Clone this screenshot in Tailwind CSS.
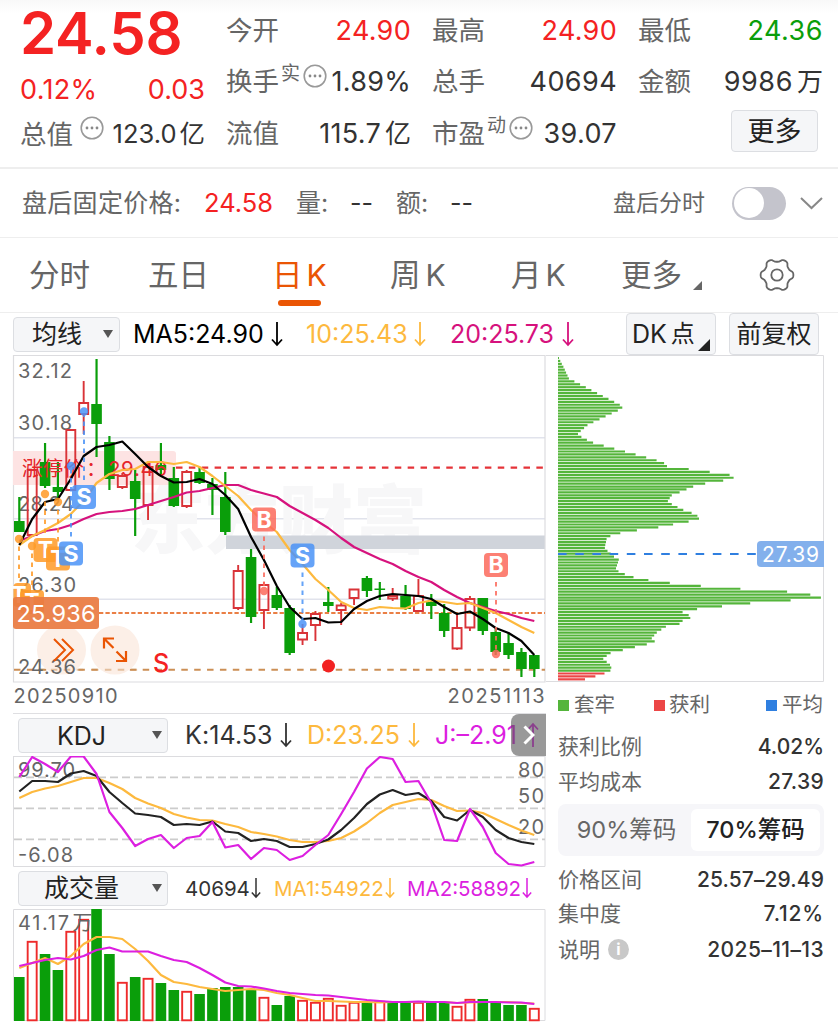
<!DOCTYPE html>
<html lang="zh-CN">
<head>
  <meta charset="UTF-8">
  <meta name="viewport" content="width=device-width, initial-scale=1.0">
  <title>日K 行情</title>
  <script src="https://cdn.jsdelivr.net/npm/@tailwindcss/browser@4"></script>
</head>
<body class="bg-white w-[838px] h-[1024px] overflow-hidden font-['Inter','Noto_Sans_CJK_SC',sans-serif] text-[#666] leading-none whitespace-nowrap">
  <!-- Shared icons -->
  <svg class="hidden">
    <symbol id="down" viewBox="0 0 12 26"><path d="M6 1V24M1 18.5L6 24L11 18.5" fill="none" stroke="currentColor" stroke-width="1.8"/></symbol>
    <symbol id="more" viewBox="0 0 24 24"><circle cx="12" cy="12" r="10.8" fill="none" stroke="#999" stroke-width="1.6"/><g fill="#888"><circle cx="7" cy="12" r="1.4"/><circle cx="12" cy="12" r="1.4"/><circle cx="17" cy="12" r="1.4"/></g></symbol>
    <symbol id="caret" viewBox="0 0 10 8"><path d="M0 0H10L5 8Z" fill="#555"/></symbol>
  </svg>

  <!-- Quote -->
  <header class="h-[169px] border-b-2 border-[#eee] pl-[20px] pt-1 flex gap-[21px] text-[26.5px] bg-linear-to-b from-[#f8f8f8] from-0% to-white to-8%">
    <div class="w-[185px]">
      <div class="h-[58px] flex items-center text-[58px] font-semibold text-[#f42222] tracking-[-0.2px]">24.58</div>
      <div class="h-[54px] flex items-center justify-between text-[#f42222]"><span class="text-[27px] tracking-[0.3px]">0.12%</span><span class="text-[27px]">0.03</span></div>
      <div class="h-[36px] flex items-center"><span class="w-[60px]">总值</span><svg class="w-6 h-6 mb-3"><use href="#more"/></svg><span class="ml-auto text-[#333] text-[25.5px]">123.0<span class="ml-[3px]">亿</span></span></div>
    </div>
    <div class="w-[185px]">
      <div class="h-[52px] flex items-center justify-between"><span>今开</span><span class="text-[#f42222] text-[27px] tracking-[0.3px]">24.90</span></div>
      <div class="h-[51px] flex items-center"><span>换手</span><span class="text-[19px] mb-4 ml-[2px]">实</span><svg class="w-6 h-6 mb-3 ml-[3px]"><use href="#more"/></svg><span class="ml-auto text-[#333] text-[27px] tracking-[0.3px]">1.89%</span></div>
      <div class="h-[53px] flex items-center justify-between"><span>流值</span><span class="text-[#333] text-[27px] tracking-[0.3px]">115.7<span class="ml-1 text-[26px] tracking-normal">亿</span></span></div>
    </div>
    <div class="w-[185px]">
      <div class="h-[52px] flex items-center justify-between"><span>最高</span><span class="text-[#f42222] text-[27px] tracking-[0.3px]">24.90</span></div>
      <div class="h-[51px] flex items-center justify-between"><span>总手</span><span class="text-[#333] text-[27px] tracking-[0.4px]">40694</span></div>
      <div class="h-[53px] flex items-center"><span>市盈</span><span class="text-[19px] mb-4 ml-[2px]">动</span><svg class="w-6 h-6 mb-3 ml-[3px]"><use href="#more"/></svg><span class="ml-auto text-[#333] text-[27px] tracking-[0.4px]">39.07</span></div>
    </div>
    <div class="w-[185px]">
      <div class="h-[52px] flex items-center justify-between"><span>最低</span><span class="text-[#0a9e0a] text-[27px] tracking-[0.5px]">24.36</span></div>
      <div class="h-[51px] flex items-center justify-between"><span>金额</span><span class="text-[#333] text-[27px] tracking-[0.6px]">9986<span class="ml-1 text-[26px] tracking-normal">万</span></span></div>
      <div class="h-[52px] flex items-start justify-end"><button class="w-[87px] h-[42px] mr-[5px] mt-[3px] border border-[#dcdee2] rounded bg-[#f5f6f8] text-[#222] text-[27px]">更多</button></div>
    </div>
  </header>

  <!-- After-hours price -->
  <div class="h-[69px] border-b border-[#eee] pl-[22px] flex items-center text-[25px]">
    <span class="w-[182px] tracking-[0.3px]">盘后固定价格:</span>
    <span class="w-[92px] text-[#f42222] text-[25.5px]">24.58</span>
    <span class="w-[54px]">量:</span>
    <span class="w-[46px] text-[#333]">--</span>
    <span class="w-[54px]">额:</span>
    <span class="w-[163px] text-[#333]">--</span>
    <span class="w-[119px] text-[23px]">盘后分时</span>
    <span class="w-[54px] h-[33px] rounded-full bg-[#c4c4cc] p-[1.5px]"><span class="block w-[30px] h-[30px] rounded-full bg-white"></span></span>
    <svg class="ml-[14px] w-[23px] h-[13px]" viewBox="0 0 23 13"><path d="M1 1L11.500 11L22 1" fill="none" stroke="#888" stroke-width="2"/></svg>
  </div>

  <!-- Period tabs -->
  <nav class="h-[75px] border-b border-[#eee] pl-[29px] flex items-center text-[30.5px]">
    <span class="w-[119px]">分时</span>
    <span class="w-[124px]">五日</span>
    <span class="relative w-[118px] text-[#ea5504]">日<span class="ml-[4px] text-[30px]">K</span><span class="absolute left-[6px] top-[40px] w-[43px] h-[6px] rounded-full bg-[#ea5504]"></span></span>
    <span class="w-[121px]">周<span class="ml-[5px] text-[30px]">K</span></span>
    <span class="w-[110px]">月<span class="ml-[4px] text-[30px]">K</span></span>
    <span>更多</span>
    <svg class="w-[9px] h-[9px] ml-[11px] mt-5" viewBox="0 0 9 9"><path d="M9 0V9H0Z" fill="#666"/></svg>
    <svg class="w-9 h-9 ml-[57px]" viewBox="-18 -18 36 36" fill="none" stroke="#666" stroke-width="1.800"><path id="gear" stroke-linejoin="round"/><circle r="5.700"/></svg>
  </nav>

  <!-- MA toolbar -->
  <div class="h-[42px] pl-[13px] flex items-center text-[25px]">
    <div class="w-[107px] h-[35px] mr-[13px] border border-[#dcdee2] rounded bg-[#f5f6f8] text-[#222] flex items-center pl-[18px]"><span class="w-[71px]">均线</span><svg class="w-[10px] h-2"><use href="#caret"/></svg></div>
    <span class="w-[138px] text-black">MA5:24.90</span><svg class="w-3 h-[26px] mr-[23px] text-black"><use href="#down"/></svg>
    <span class="w-[108px] text-[#fdb93e]">10:25.43</span><svg class="w-3 h-[26px] mr-6 text-[#fdb93e]"><use href="#down"/></svg>
    <span class="w-[112px] text-[#d6127d]">20:25.73</span><svg class="w-3 h-[26px] text-[#d6127d]"><use href="#down"/></svg>
    <div class="w-[90px] h-[42px] ml-[52px] border border-[#dcdee2] rounded bg-[#f5f6f8] text-[#222] flex items-center pl-[5px] relative">DK<span class="ml-1 text-[24px]">点</span><svg class="absolute right-[5px] bottom-[3px] w-3 h-3" viewBox="0 0 12 12"><path d="M12 0V12H0Z" fill="#222"/></svg></div>
    <div class="w-[90px] h-[42px] ml-[13px] border border-[#dcdee2] rounded bg-[#f5f6f8] text-[#222] flex items-center justify-center">前复权</div>
  </div>

  <main class="flex">
    <section class="w-[546px]">
      <!-- Candles; user units are page pixels -->
      <svg class="block w-[546px] h-[358px]" viewBox="0 355 546 358" font-family="Inter, 'Noto Sans CJK SC', sans-serif" fill="none">
        <g stroke="#e1e3ec" stroke-width="1.500">
          <path d="M14 437.700H545M14 518.700H545M14 599.300H545"/>
        </g>
        <text x="131" y="547" font-size="74" font-weight="900" fill="#f7f7f8" textLength="296">东方财富</text>
        <path d="M226 542.300H545" stroke="#d0d4db" stroke-width="13.500"/>
        <path d="M13.500 682V355.500H545V682Z" stroke="#dcdcdf" stroke-width="1.200"/>
        <path d="M176 467.700H545" stroke="#e53338" stroke-width="2.200" stroke-dasharray="6.500 6.370"/>
        <path d="M99 613H545" stroke="#ea7f45" stroke-width="2" stroke-dasharray="4.300 2.150"/>
        <path d="M14 669.800H545" stroke="#cc8f55" stroke-width="2" stroke-dasharray="6.500 6.370"/>
        <path d="M13 451H173Q176 451 176 454V482Q176 485 173 485H13Z" fill="#fde3e3"/>
        <g fill="#fcefe7"><circle cx="61.500" cy="650" r="24.500"/><circle cx="115" cy="650" r="24.500"/></g>
        <path d="M38 669.800H86M92 669.800H139" stroke="#cc8f55" stroke-opacity=".5" stroke-width="2" stroke-dasharray="6.500 6.370"/>
        <g font-size="20" fill="#666">
          <text x="18" y="378" textLength="54">32.12</text>
          <text x="18" y="430" textLength="54">30.18</text>
          <text x="18" y="511" textLength="56">28.24</text>
          <text x="18" y="592" textLength="58">26.30</text>
          <text x="18" y="674" textLength="58">24.36</text>
          <text x="13.500" y="703" textLength="104">20250910</text>
          <text x="447.500" y="703" textLength="97">20251113</text>
        </g>
        <g id="candles"></g>
        <g font-size="20.500" fill="#e5262b">
          <text x="22" y="476" textLength="62">涨停价</text><text x="86" y="476">：</text><text x="108" y="475.500" textLength="59">29.46</text>
        </g>
        <g id="averages" stroke-width="2.200" stroke-linejoin="round"></g>
        <g id="markers" font-size="23" font-weight="700" text-anchor="middle"></g>
        <rect x="13" y="597" width="86" height="32" rx="3" fill="#e97b42" fill-opacity=".93"/>
        <text x="16.500" y="621.500" font-size="23.500" fill="#fff" textLength="79">25.936</text>
        <path d="M54 639L65 650L54 661M62 639L73 650L62 661" stroke="#ea5504" stroke-width="2"/>
        <path d="M114 638.500H104V648.500M104 638.500L113.500 648M116 661H126V651M126 661L116.500 651.500" stroke="#ea5504" stroke-width="2.200"/>
        <text x="153" y="671.500" font-size="25" font-weight="500" fill="#f42222">S</text>
        <circle cx="328.500" cy="666" r="6.500" fill="#f22222"/>
      </svg>

      <!-- KDJ -->
      <div class="relative ml-[13px] h-[43px] border-t border-[#dfdfe2] pl-[5px] flex items-center text-[25px]">
        <div class="w-[150px] h-[35px] mr-[17px] border border-[#dcdee2] rounded bg-[#f5f6f8] text-[#222] flex items-center pl-[38px]"><span class="w-[95px] pt-[2px]">KDJ</span><svg class="w-[10px] h-2"><use href="#caret"/></svg></div>
        <span class="w-[95px] pt-px text-[#333] tracking-[0.1px]">K:14.53</span><svg class="w-3 h-[26px] mr-[15px] text-[#333]"><use href="#down"/></svg>
        <span class="w-[101px] pt-px text-[#fdb93e]">D:23.25</span><svg class="w-3 h-[26px] mr-[15px] text-[#fdb93e]"><use href="#down"/></svg>
        <span class="w-[92px] pt-px text-[#dc1fe0]">J:–2.91</span><svg class="w-3 h-[26px] text-[#dc1fe0] rotate-180"><use href="#down"/></svg>
        <div class="absolute right-0 top-0 w-[35px] h-[42px] rounded-l-lg bg-[#555]/60 flex items-center justify-center"><svg class="w-[12px] h-[20px]" viewBox="0 0 12 20"><path d="M1.500 1.500L10 10L1.500 18.500" fill="none" stroke="#fff" stroke-width="3"/></svg></div>
      </div>
      <svg class="block w-[546px] h-[111px]" viewBox="0 756 546 111" font-family="Inter, sans-serif" fill="none">
        <path d="M13.500 756V866.500H545V756" stroke="#dcdcdf"/><path d="M13 756H545" stroke="#dcdcdf" stroke-width="2"/>
        <path d="M14 777.300H545M14 808.300H545M14 839.300H545" stroke="#ccc" stroke-width="1.700" stroke-dasharray="8 4"/>
        <g font-size="20" fill="#666">
          <text x="18" y="777" textLength="57">99.70</text>
          <text x="18" y="862" textLength="55">-6.08</text>
          <text x="518" y="777" textLength="26">80</text>
          <text x="518" y="803" textLength="26">50</text>
          <text x="518" y="834" textLength="26">20</text>
        </g>
        <g id="kdj" stroke-width="2.200" stroke-linejoin="round"></g>
      </svg>

      <!-- Volume -->
      <div class="h-[42px] pl-[18px] flex items-center text-[20.5px]">
        <div class="w-[150px] h-[35px] mr-[17px] border border-[#dcdee2] rounded bg-[#f5f6f8] text-[#222] text-[25px] flex items-center pl-[25px]"><span class="w-[108px] pt-px">成交量</span><svg class="w-[10px] h-2"><use href="#caret"/></svg></div>
        <span class="w-[66px] pt-[2px] text-[#333]">40694</span><svg class="w-[10px] h-[22px] mr-[13px] text-[#333]"><use href="#down"/></svg>
        <span class="w-[111px] pt-[2px] text-[#fdb93e]">MA1:54922</span><svg class="w-[10px] h-[22px] mr-3 text-[#fdb93e]"><use href="#down"/></svg>
        <span class="w-[115px] pt-[2px] text-[#dc1fe0]">MA2:58892</span><svg class="w-[10px] h-[22px] text-[#dc1fe0]"><use href="#down"/></svg>
      </div>
      <svg class="block w-[546px] h-[115px]" viewBox="0 909 546 115" font-family="Inter, 'Noto Sans CJK SC', sans-serif" fill="none">
        <path d="M13.500 1020.500V909.500H545V1020.500Z" stroke="#dcdcdf"/>
        <g id="volume"></g>
        <g font-size="20" fill="#666"><text x="18" y="930" textLength="51">41.17</text><text x="72.500" y="930">万</text></g>
        <g id="volumeAverages" stroke-width="2.200" stroke-linejoin="round"></g>
      </svg>
    </section>

    <!-- Chip distribution -->
    <aside class="w-[292px] text-[21px]">
      <svg class="block w-[292px] h-[328px]" viewBox="546 355 292 328" font-family="Inter, sans-serif" fill="none">
        <path d="M546 355.500H823.500V681.500H546" stroke="#dcdcdf"/>
        <g id="chips" stroke-width="2.200"></g>
        <path d="M558 554H756" stroke="#2f7fe0" stroke-width="2" stroke-dasharray="8.600 8.600"/>
        <path d="M761 541H824V567H761Q757 567 757 563V545Q757 541 761 541Z" fill="#83b0ec"/>
        <text x="762" y="561.500" font-size="21" fill="#fff" textLength="57">27.39</text>
      </svg>
      <div class="pl-3 w-[278px]">
        <div class="h-[45px] flex items-center text-[20.5px]">
          <i class="w-[11px] h-[11px] mr-[5px] bg-[#54b53b]"></i><span class="w-[80px]">套牢</span>
          <i class="w-[11px] h-[11px] mr-1 bg-[#ec4646]"></i><span class="w-[97px]">获利</span>
          <i class="w-[11px] h-[11px] mr-[5px] bg-[#2f7fe0]"></i><span>平均</span>
        </div>
        <div class="h-[36px] flex items-center justify-between"><span>获利比例</span><span class="font-medium text-[#333]">4.02%</span></div>
        <div class="h-[34px] flex items-center justify-between"><span>平均成本</span><span class="font-medium text-[#333] tracking-[0.3px]">27.39</span></div>
        <div class="h-[52px] mt-[6px] mb-[6px] rounded-lg bg-[#f6f6f9] flex items-center p-1 text-[23.5px]">
          <span class="w-[129px] text-center">90%筹码</span>
          <span class="w-[129px] h-[42px] rounded-md bg-white text-[#222] font-medium flex items-center justify-center">70%筹码</span>
        </div>
        <div class="h-[34px] flex items-center justify-between"><span>价格区间</span><span class="font-medium text-[#333] tracking-[0.1px]">25.57–29.49</span></div>
        <div class="h-[34px] flex items-center justify-between"><span>集中度</span><span class="font-medium text-[#333] tracking-[0.8px]">7.12%</span></div>
        <div class="h-[38px] flex items-center"><span>说明</span><span class="ml-[8px] w-[21px] h-[21px] rounded-full bg-[#c8c8c8] text-white text-[16px] font-bold flex items-center justify-center">i</span><span class="ml-auto font-medium text-[#333] tracking-[0.4px]">2025–11–13</span></div>
      </div>
    </aside>
  </main>

  <script>
    const GREEN = '#0a9e0a', RED = '#d93338';
    const x = i => 19.3 + i * 12.875;
    const put = (id, html) => { document.getElementById(id).innerHTML = html; };
    const line = (ys, color) => `<polyline points="${ys.map((y, i) => x(i) + ',' + y).join(' ')}" stroke="${color}"/>`;

    // [up, high, bodyTop, bodyBottom, low]
    const candles = [
      [0,497,521,532,532],[1,470,470,535,535],[0,443,462,486,488],[0,462,487,492,498],[1,429,430,490,491],[1,381,403,414,434],
      [0,359,404,424,457],[0,436,442,479,490],[1,473,476,487,489],[0,470,481,499,536],[1,464,467,505,520],[0,443,465,470,475],
      [0,467,478,506,507],[1,470,472,506,508],[0,467,472,483,484],[0,478,484,490,515],[0,472,497,532,535],[1,565,571,608,610],
      [0,549,557,617,623],[1,582,585,610,629],[0,587,595,608,610],[0,605,608,653,655],[1,624,633,639.5,645],[1,611,614,625,641],
      [0,587,602,606,612],[1,603,605.5,610,625],[1,589,589.5,598,605],[0,576,578,591,597],[0,582,588.5,590,600],[1,588,596,598.5,601],
      [0,585,596,609,610],[1,579,596,611,611],[0,594,602,606,619],[0,604,613,631,637],[1,613,628,648.5,650],[1,596,599,627.5,631],
      [0,598,598,631,635],[0,629,632,652,655],[0,633,643,655,659],[0,648,652,669,677],[0,655,655,669,677],
    ];
    put('candles', candles.map(([up, high, top, bottom, low], i) => up
      ? `<path d="M${x(i)} ${high}V${top}M${x(i)} ${bottom}V${low}M${x(i) - 4.5} ${top}h9V${bottom}h-9Z" stroke="${RED}" stroke-width="1.900"/>`
      : `<path d="M${x(i)} ${high}V${low}" stroke="${GREEN}" stroke-width="2.200"/><rect x="${x(i) - 5.3}" y="${top}" width="10.600" height="${bottom - top}" fill="${GREEN}"/>`).join(''));

    const ma5 = [545,519,502,499,479,456,447,445,441.5,454,467,476,482.5,482,479,484,495,509,537,560,586,607,619,618,622.5,622,609,601,596,594,595,596,599,607,614,611.5,619,628,633,641,655];
    const ma10 = [545,536,530,523,514,501,483,474,470,469,462,462,464,462,467,476,486,496,510,522,532,550,564,579,590,602,608,610,607,608,608.5,603,600.5,602,604,603,608,613,620,627,633];
    const ma20 = [541,536,531,529,525,519,514,512,511,509,505,501,497,492.5,491,488,485,485,490,493.5,497,506,513,520,528,538,547,553,559,564,571,577,582,590,597,603,607,611,614,618,621];
    put('averages', line(ma20, '#d6127d') + line(ma10, '#fdb93e') + line(ma5, '#000'));

    // Trade markers: letter, box centre, dot centre
    const ORANGE = '#ff9b28', BLUE = '#4b93f7', CORAL = '#fc6a5c';
    const markers = [
      ['T', 19, 595, 19, 539, ORANGE], ['T', 32, 602, 32, 546, ORANGE], ['T', 45.5, 550, 45, 494, ORANGE], ['T', 58, 558.5, 58, 502, ORANGE],
      ['S', 71, 553.5, 71, 466, BLUE], ['S', 84, 497, 84, 411.5, BLUE], ['B', 264, 519.5, 264, 591, CORAL],
      ['S', 302.5, 555.5, 302.5, 624, BLUE], ['B', 496, 565, 496, 654, CORAL],
    ];
    put('markers', markers.map(([letter, bx, by, dx, dy, color]) => {
      const dir = Math.sign(dy - by);
      const left = Math.max(bx - 12, 13.5);
      return `<g opacity=".85"><path d="M${dx} ${by + dir * 17}V${dy - dir * 4}" stroke="${color}" stroke-width="2" stroke-dasharray="4.500 4.500"/>
        <circle cx="${dx}" cy="${dy}" r="4.200" fill="${color}"/>
        <rect x="${left}" y="${by - 12}" width="${bx + 12 - left}" height="24" rx="4" fill="${color}"/></g>
        <text x="${bx}" y="${by + 8.3}" fill="#fff">${letter}</text>`;
    }).join(''));

    const k = [791.5,781,781,782,773.5,771,776,792,803,813.5,815,817,825,824,825,821.5,831.5,833,841,839,841,847,847,844,839.5,830,818,804,794.5,790,795,793,801,817,820.5,810,817,830,838,842,844];
    const d = [798,792,788.5,786,782,778,778,783,789,798,803.5,808,814,817.5,820,820.5,824,827,832,834,836.5,840,842,842,841,838,831.5,823,813,805,802,799,800,806,811,810.5,813,819,825,830.5,835];
    const j = [777,757,764,772,756.5,756.5,774,812,828,846,839,835,848,838,836,822,847.5,845,859,848,850,860,856,845,835,814,792,768.5,757,759,782,781,803,840,841,809,827,853,864,865.5,862];
    put('kdj', line(d, '#fdb93e') + line(k, '#222') + line(j, '#dc1fe0'));

    // [up, top]
    const volume = [[0,977],[1,941],[0,954],[0,970],[1,931],[1,919],[0,909],[0,954],[1,982],[0,977],[1,978],[0,983],[0,990],[1,991],[0,994],[0,988],[0,987],[0,987],[0,989],[1,997],[0,1005],[0,996],[1,1000],[1,1002],[1,998],[1,1005],[1,1002],[0,1002],[1,1001],[0,1002],[0,1001],[1,1002],[0,1001],[0,1003],[1,1006],[1,999],[0,999],[0,1002],[0,1005],[0,1005],[1,1008]];
    put('volume', volume.map(([up, top], i) => up
      ? `<rect x="${x(i) - 4.5}" y="${top + .8}" width="9" height="${1019.5 - top}" stroke="#ee2b2b" stroke-width="1.900"/>`
      : `<rect x="${x(i) - 5.3}" y="${top}" width="10.600" height="${1021 - top}" fill="${GREEN}"/>`).join(''));
    const v1 = [968,963,958,964,956,944,937,937,939,949,961,975,982,984,987,989,991,990,989,990,993,995,998,1001,1001,1001.5,1002,1002,1002.5,1002,1002,1002,1002,1002,1003,1002.5,1002,1002,1002,1003,1003.5];
    const v2 = [966,963,960,958,959.5,956,950,947.5,951.5,951.5,951.5,956,960,962,968,975,982.5,986,986.5,988.5,991,993,994,995,995.5,997,998.5,1000,1001,1002,1002,1001.5,1002,1002,1003,1002,1002,1002,1002.5,1002.5,1004];
    put('volumeAverages', line(v1, '#fdb93e') + line(v2, '#dc1fe0'));

    // Chip profile: [row position, length], in thirds of a pixel, interpolated between turning points
    const profile = [[24,3],[33,7],[50,16],[86,33],[95,51],[165,187],[173,193],[182,179],[225,89],[251,59],[260,69],[277,101],[330,294],[339,318],[348,325],[357,392],[374,514],[383,528],[392,496],[400,445],[409,407],[426,368],[435,342],[453,329],[462,341],[479,374],[488,400],[497,418],[506,423],[514,396],[523,348],[532,303],[541,237],[550,186],[558,158],[567,146],[593,140],[602,148],[620,168],[629,183],[655,174],[663,180],[672,199],[681,225],[690,271],[698,327],[708,433],[716,542],[725,686],[734,758],[742,795],[751,703],[760,578],[768,500],[777,421],[786,373],[795,392],[804,397],[813,373],[822,364],[830,324],[848,296],[865,281],[874,290],[883,266],[900,196],[909,158],[926,135],[944,156],[953,160],[962,157],[970,141],[979,113],[988,81]];
    let chips = '';
    for (let n = 0; n <= 110; n++) {
      const z = 24 + n * 8.7636;
      const at = Math.max(1, profile.findIndex(p => p[0] >= z - .1));
      const [z0, l0] = profile[at - 1], [z1, l1] = profile[at];
      const len = l0 + (l1 - l0) * (z - z0) / (z1 - z0);
      chips += `<path d="M558 ${(350 + z / 3).toFixed(2)}h${(len / 3).toFixed(1)}" stroke="${n > 107 ? '#ec4646' : '#54b53b'}"/>`;
    }
    put('chips', chips);

    // Six-lobed gear outline
    const pts = [];
    for (let a = 0; a < 360; a += 4) {
      const r = 14.8 + 1.7 * Math.tanh(1.6 * Math.cos(6 * a * Math.PI / 180));
      pts.push((r * Math.cos(a * Math.PI / 180)).toFixed(2) + ' ' + (r * Math.sin(a * Math.PI / 180)).toFixed(2));
    }
    document.getElementById('gear').setAttribute('d', 'M' + pts.join('L') + 'Z');
  </script>
</body>
</html>
